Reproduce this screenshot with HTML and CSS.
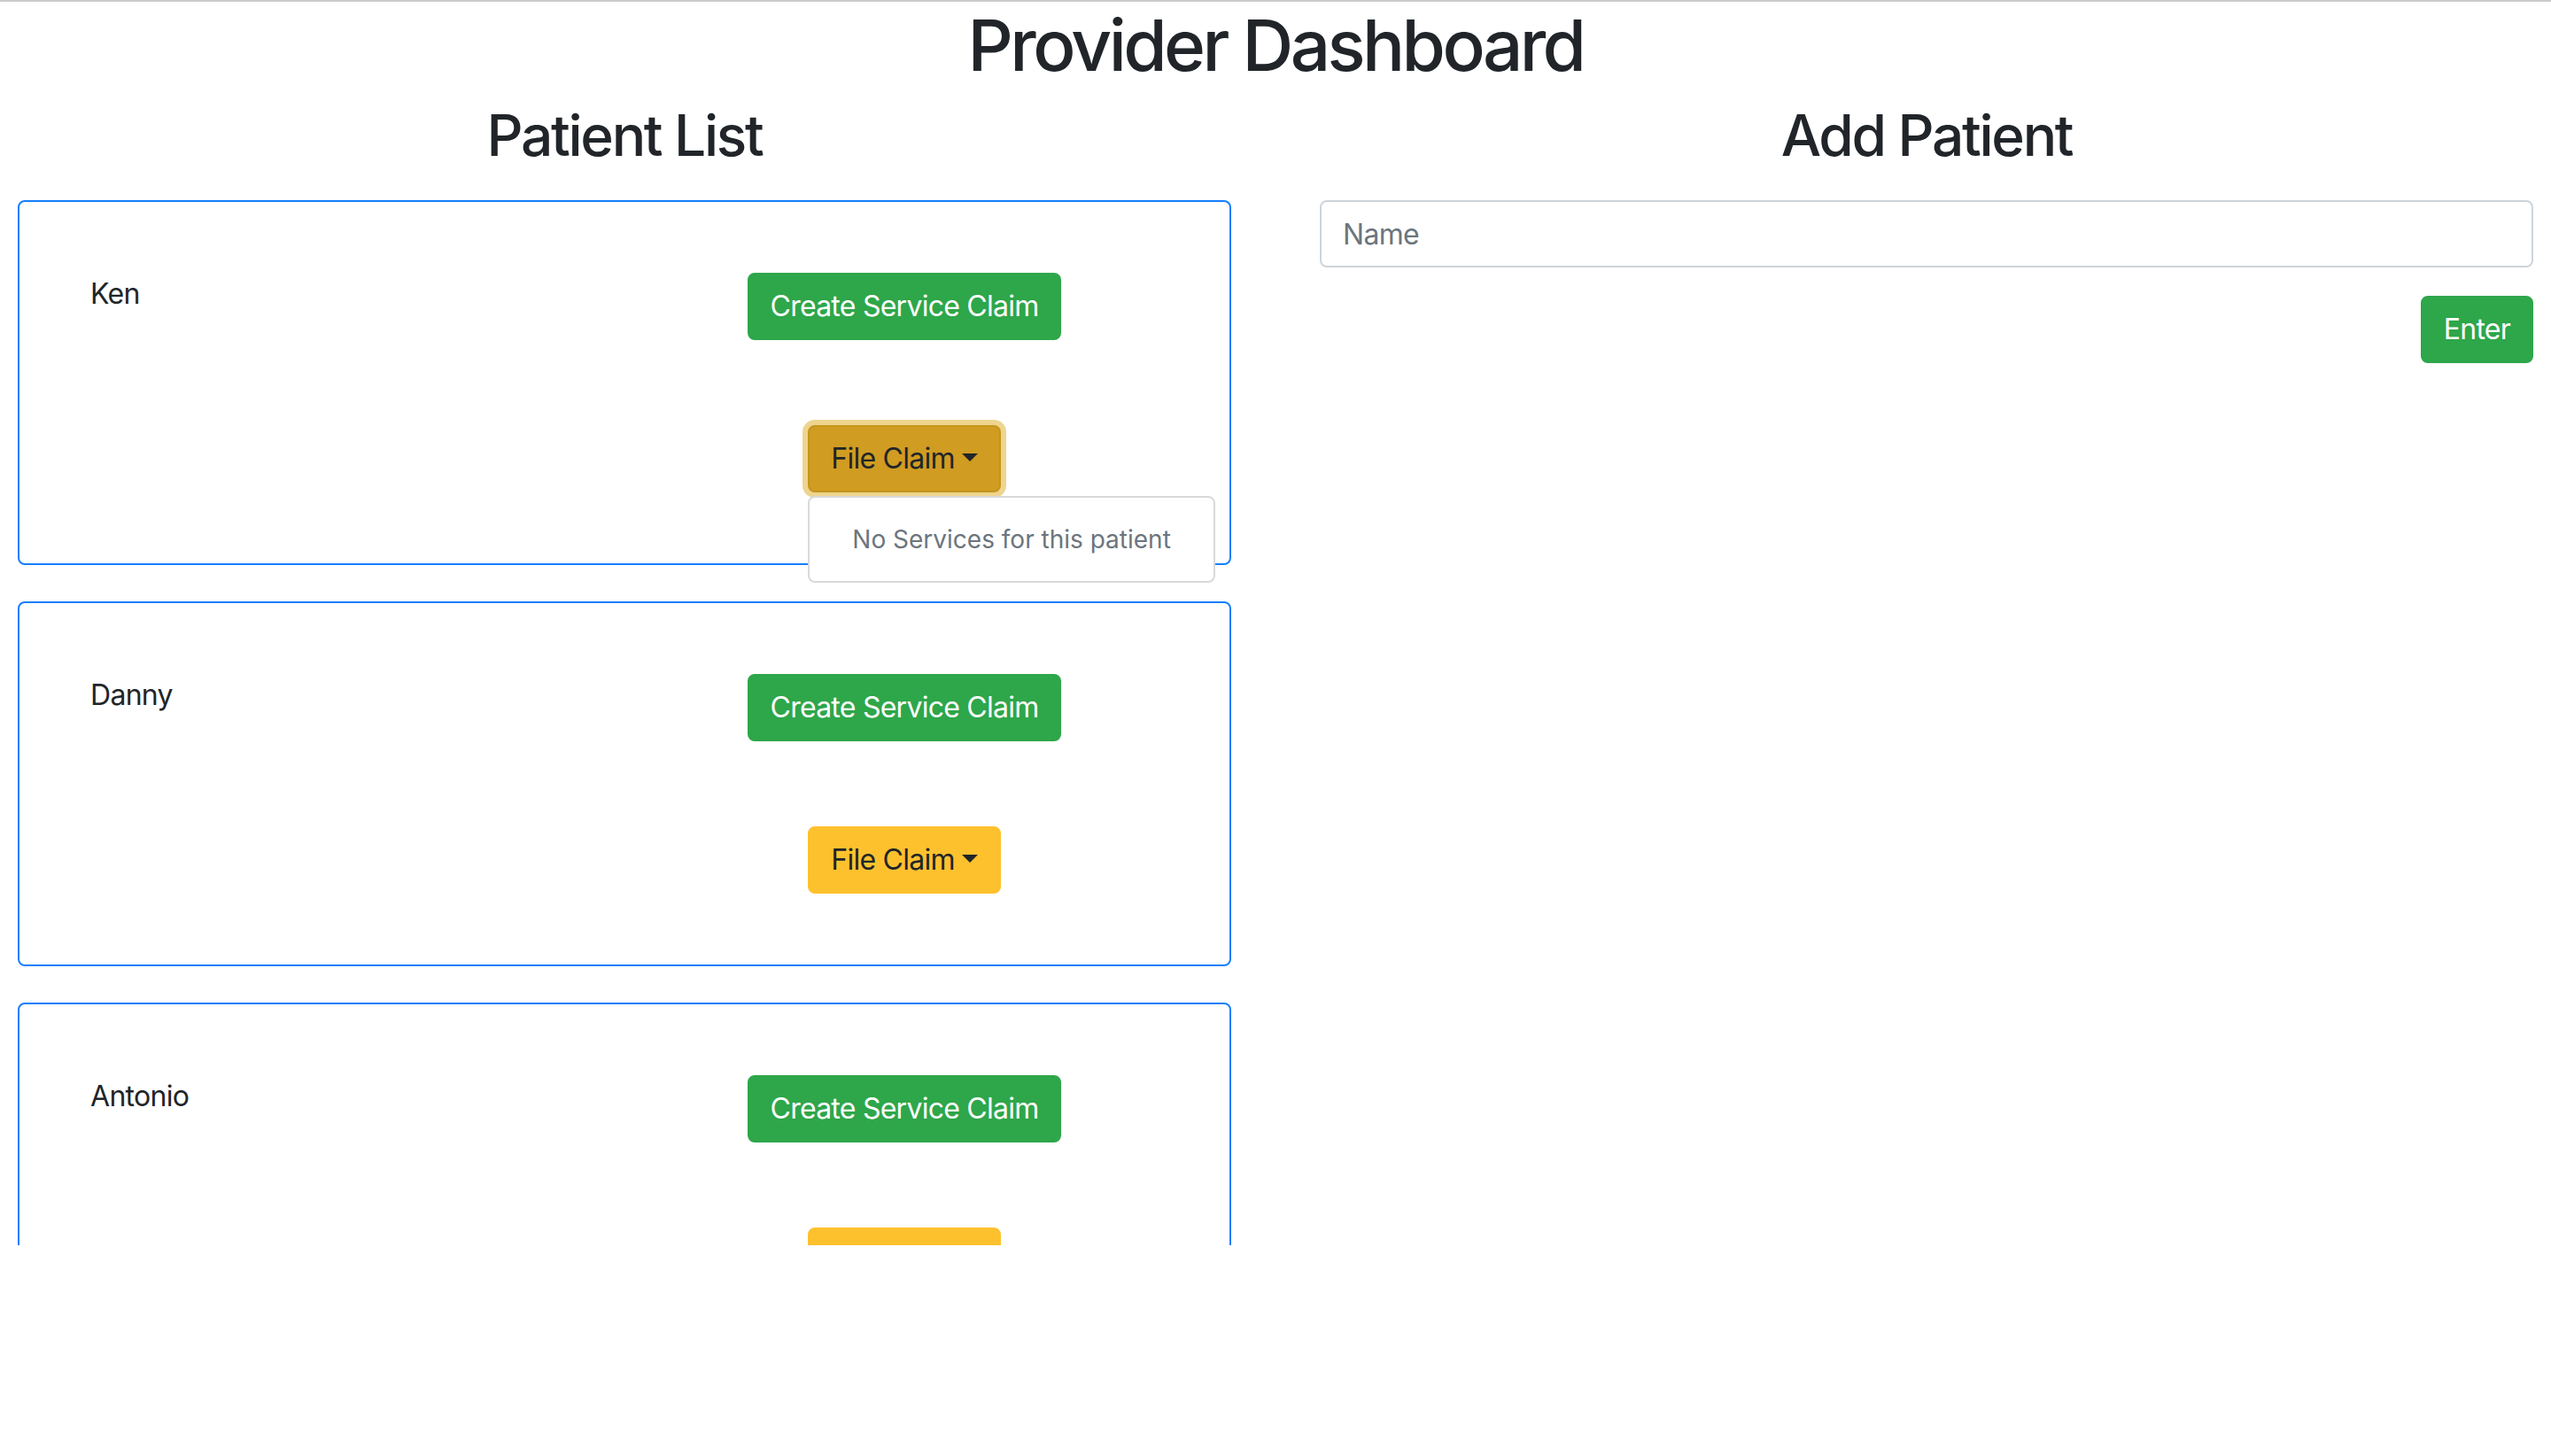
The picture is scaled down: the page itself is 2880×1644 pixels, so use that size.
FILE: index.html
```html
<!DOCTYPE html>
<html lang="en">
<head>
<meta charset="utf-8">
<title>Provider Dashboard</title>
<link rel="stylesheet" href="styles.css">
</head>
<body>
<div class="viewport">
  <h1 class="title">Provider Dashboard</h1>
  <div class="columns">
    <section class="column">
      <h2 class="column-title">Patient List</h2>

      <div class="card">
        <div class="patient-name">Ken</div>
        <div class="actions">
          <button class="btn btn-success" type="button">Create Service Claim</button>
          <div class="dropdown">
            <button class="btn btn-warning dropdown-toggle is-open" type="button">File Claim</button>
            <div class="dropdown-menu">
              <span class="dropdown-item">No Services for this patient</span>
            </div>
          </div>
        </div>
      </div>

      <div class="card">
        <div class="patient-name">Danny</div>
        <div class="actions">
          <button class="btn btn-success" type="button">Create Service Claim</button>
          <div class="dropdown">
            <button class="btn btn-warning dropdown-toggle" type="button">File Claim</button>
          </div>
        </div>
      </div>

      <div class="card">
        <div class="patient-name">Antonio</div>
        <div class="actions">
          <button class="btn btn-success" type="button">Create Service Claim</button>
          <div class="dropdown">
            <button class="btn btn-warning dropdown-toggle" type="button">File Claim</button>
          </div>
        </div>
      </div>
    </section>

    <section class="column">
      <h2 class="column-title">Add Patient</h2>
      <form class="add-form">
        <input class="form-control" type="text" placeholder="Name">
        <div class="form-actions">
          <button class="btn btn-success" type="button">Enter</button>
        </div>
      </form>
    </section>
  </div>
</div>
</body>
</html>
```

FILE: styles.css
```css
html, body {
  margin: 0;
  padding: 0;
  background: #ffffff;
}

body {
  font-family: Inter, "Noto Sans", "Liberation Sans", sans-serif;
  font-size: 32px;
  line-height: 48px;
  letter-spacing: -0.7px;
  color: #212529;
}

.viewport {
  height: 1406px;
  overflow: hidden;
  border-top: 2px solid #cbcbcb;
  box-sizing: border-box;
}

.title {
  margin: 1px 0 15px;
  font-size: 80px;
  line-height: 96px;
  font-weight: 500;
  letter-spacing: -3.6px;
  text-align: center;
}

.columns {
  display: grid;
  grid-template-columns: 1fr 1fr;
  column-gap: 100px;
  padding: 0 20px;
}

.column-title {
  margin: 0 0 35px;
  font-size: 64px;
  line-height: 77px;
  font-weight: 500;
  letter-spacing: -2.3px;
  text-align: center;
}

.card {
  display: grid;
  grid-template-columns: 632px 1fr;
  align-items: start;
  padding: 80px;
  border: 2px solid #167ffc;
  border-radius: 8px;
  margin-bottom: 41px;
}

.patient-name {
  font-size: 32px;
  line-height: 48px;
}

.actions {
  display: flex;
  flex-direction: column;
  align-items: center;
  gap: 96px;
}

.btn {
  margin: 0;
  font-family: inherit;
  font-size: 32px;
  line-height: 48px;
  font-weight: 400;
  letter-spacing: -0.75px;
  padding: 12px 24px;
  border: 2px solid transparent;
  border-radius: 8px;
  cursor: pointer;
  white-space: nowrap;
}

.btn-success {
  background: #2ea64a;
  border-color: #2ea64a;
  color: #ffffff;
}

.btn-warning {
  background: #fdc12e;
  border-color: #fdc12e;
  color: #212529;
}

.btn-warning.is-open {
  background: #d09c21;
  border-color: #c4951e;
  box-shadow: 0 0 0 6px #eed48e;
}

.dropdown {
  position: relative;
}

.dropdown-toggle::after {
  content: "";
  display: inline-block;
  margin-left: 8px;
  vertical-align: 8px;
  border-top: 9.6px solid;
  border-right: 9.6px solid transparent;
  border-left: 9.6px solid transparent;
  border-bottom: 0;
}

.dropdown-menu {
  position: absolute;
  top: calc(100% + 4px);
  left: 0;
  z-index: 5;
  min-width: 320px;
  padding: 16px 0;
  background: #ffffff;
  border: 2px solid #d9d9d9;
  border-radius: 8px;
}

.dropdown-item {
  display: block;
  padding: 8px 48px;
  font-size: 28px;
  line-height: 46px;
  letter-spacing: 0;
  color: #6c757d;
  white-space: nowrap;
}

.add-form {
  margin: 0;
}

.form-control {
  display: block;
  width: 100%;
  height: 76px;
  box-sizing: border-box;
  margin: 0;
  padding: 12px 24px;
  font-family: inherit;
  font-size: 32px;
  line-height: 48px;
  letter-spacing: -0.7px;
  color: #495057;
  background: #ffffff;
  border: 2px solid #ced4da;
  border-radius: 8px;
  outline: none;
}

.form-control::placeholder {
  color: #6c757d;
  opacity: 1;
}

.form-actions {
  margin-top: 32px;
  display: flex;
  justify-content: flex-end;
}
```
